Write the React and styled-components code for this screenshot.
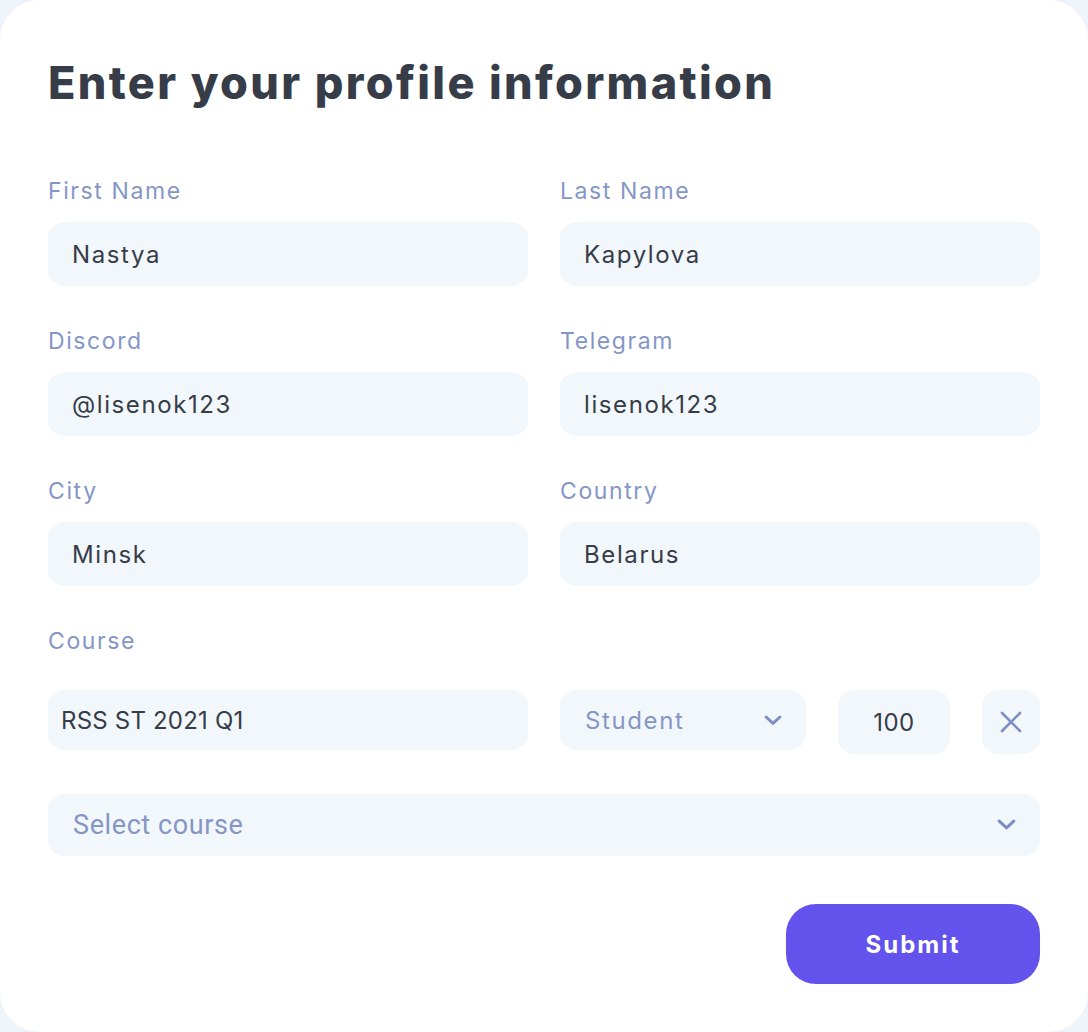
import React from "react";
import styled, { createGlobalStyle } from "styled-components";

const Global = createGlobalStyle`
  html, body { margin: 0; padding: 0; background: #eef4fa; }
  * { box-sizing: border-box; }
  body { font-family: "Inter", "Noto Sans", sans-serif; }
`;

const Card = styled.form`
  width: 1088px;
  min-height: 1032px;
  background: #ffffff;
  border-radius: 40px;
  padding: 50px 48px 48px;
  display: flex;
  flex-direction: column;
`;

const Title = styled.h1`
  margin: 0 0 60px 0;
  font-size: 45px;
  line-height: 66px;
  font-weight: 800;
  color: #363c48;
  letter-spacing: 2.35px;
`;

const Grid = styled.div`
  display: grid;
  grid-template-columns: 480px 480px;
  column-gap: 32px;
  row-gap: 40px;
`;

const Field = styled.div`
  display: flex;
  flex-direction: column;
  gap: 16px;
`;

const Label = styled.label`
  font-size: 23px;
  line-height: 30px;
  color: #8596c6;
  font-weight: 400;
  letter-spacing: 1.6px;
`;

const TextInput = styled.input`
  width: ${(p) => p.$w || "100%"};
  height: ${(p) => p.$h || 64}px;
  border: none;
  outline: none;
  border-radius: 16px;
  background: #f2f7fb;
  padding: 0 ${(p) => p.$pad ?? 24}px;
  font-family: inherit;
  font-size: 24px;
  letter-spacing: ${(p) => p.$ls ?? 1.6}px;
  color: #363c48;
  text-align: ${(p) => (p.$center ? "center" : "left")};
`;

const CourseBlock = styled.div`
  margin-top: 40px;
  display: flex;
  flex-direction: column;
`;

const CourseRow = styled.div`
  margin-top: 34px;
  display: flex;
  align-items: flex-start;
  gap: 32px;
`;

const Select = styled.div`
  width: ${(p) => p.$w};
  height: ${(p) => p.$h}px;
  margin-top: ${(p) => p.$mt || 0}px;
  border-radius: 16px;
  background: #f2f7fb;
  display: flex;
  align-items: center;
  justify-content: space-between;
  padding: 0 ${(p) => p.$padR}px 0 ${(p) => p.$padL}px;
  font-size: ${(p) => p.$fs}px;
  letter-spacing: ${(p) => p.$ls}px;
  font-family: ${(p) => p.$font || "inherit"};
  color: #8596c6;
`;

const IconButton = styled.button`
  width: 58px;
  height: 64px;
  border: none;
  border-radius: 16px;
  background: #f2f7fb;
  display: flex;
  align-items: center;
  justify-content: center;
  padding: 0;
  cursor: pointer;
`;

const Footer = styled.div`
  margin-top: 48px;
  display: flex;
  justify-content: flex-end;
`;

const Submit = styled.button`
  width: 254px;
  height: 80px;
  border: none;
  border-radius: 30px;
  background: #6352ec;
  color: #ffffff;
  font-family: inherit;
  font-size: 24px;
  font-weight: 700;
  letter-spacing: 2px;
  cursor: pointer;
`;

const Chevron = ({ w = 18 }) => (
  <svg width={w} height={w * 0.6} viewBox="0 0 18 11" fill="none">
    <path d="M2 2l7 6.5L16 2" stroke="#7d8fc2" strokeWidth="3" strokeLinecap="round" strokeLinejoin="round" />
  </svg>
);

const Cross = () => (
  <svg width="22" height="22" viewBox="0 0 22 22" fill="none">
    <path d="M2 2l18 18M20 2L2 20" stroke="#7d8fc2" strokeWidth="2.6" strokeLinecap="round" />
  </svg>
);

const fields = [
  ["First Name", "Nastya"],
  ["Last Name", "Kapylova"],
  ["Discord", "@lisenok123"],
  ["Telegram", "lisenok123"],
  ["City", "Minsk"],
  ["Country", "Belarus"],
];

export default function App() {
  return (
    <>
      <Global />
      <Card onSubmit={(e) => e.preventDefault()}>
        <Title>Enter your profile information</Title>
        <Grid>
          {fields.map(([label, value]) => (
            <Field key={label}>
              <Label>{label}</Label>
              <TextInput defaultValue={value} />
            </Field>
          ))}
        </Grid>
        <CourseBlock>
          <Label>Course</Label>
          <CourseRow>
            <TextInput $w="480px" $h={60} $pad={13} $ls={0.2} defaultValue="RSS ST 2021 Q1" />
            <Select $w="246px" $h={60} $padL={25} $padR={24} $fs={24} $ls={1.6}>
              Student
              <Chevron />
            </Select>
            <TextInput $w="112px" $center $pad={8} $ls={0.5} defaultValue="100" />
            <IconButton type="button" aria-label="Remove">
              <Cross />
            </IconButton>
          </CourseRow>
        </CourseBlock>
        <Select $w="992px" $h={62} $mt={40} $padL={25} $padR={24} $fs={27} $ls={0.6} $font={"Roboto, sans-serif"}>
          Select course
          <Chevron w={19} />
        </Select>
        <Footer>
          <Submit type="submit">Submit</Submit>
        </Footer>
      </Card>
    </>
  );
}
